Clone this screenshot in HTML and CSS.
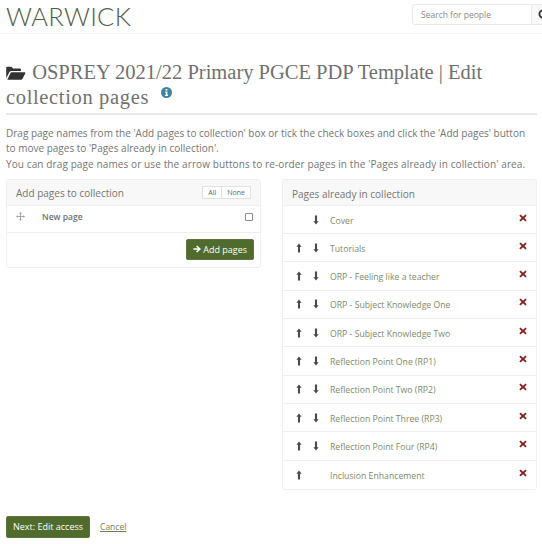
FILE: index.html
```html
<!DOCTYPE html>
<html lang="en">
<head>
    <meta charset="UTF-8">
    <title>Edit collection pages</title>
    <link rel="stylesheet" href="styles.css">
</head>
<body>
    <svg class="defs" width="0" height="0">
        <symbol id="up" viewBox="0 0 8 12"><path d="M4 0 7.5 4.2H5.4V12H2.6V4.2H.5Z"/></symbol>
        <symbol id="down" viewBox="0 0 8 12"><path d="M4 12 .5 7.8H2.6V0H5.4V7.8H7.5Z"/></symbol>
        <symbol id="cross" viewBox="0 0 10 10"><path d="M1.9.6 5 3.3 8.1.6 9.6 2.1 6.8 5 9.6 7.9 8.1 9.4 5 6.7 1.9 9.4.4 7.9 3.2 5 .4 2.1Z"/></symbol>
    </svg>

    <header class="topbar">
        <div class="logo">WARWICK</div>
        <div class="search">
            <input class="search-input" type="text" placeholder="Search for people">
            <div class="search-btn">
                <svg width="12" height="12" viewBox="0 0 12 12"><circle cx="5" cy="5" r="3.6" fill="none" stroke="#333" stroke-width="1.8"/></svg>
            </div>
        </div>
    </header>

    <main class="content">
        <h1 class="title">
            <svg class="folder" width="20" height="14" viewBox="0 0 21 15"><path d="M0 13V2Q0 .8 1.2 .8H5.5L7.3 2.6H14.5Q15.8 2.6 15.8 3.9V5.3H5.5Q4.2 5.3 3.5 6.5Z"/><path d="M1.2 14.6 4.6 7.4Q5 6.6 6 6.6H19.6Q21 6.6 20.4 8L17.5 13.6Q17 14.6 15.8 14.6Z"/></svg>
            OSPREY 2021/22 Primary PGCE PDP Template | Edit <span class="title-end">collection pages</span>
            <svg class="info" width="11" height="11" viewBox="0 0 11 11"><circle cx="5.5" cy="5.5" r="5.5" fill="#3f83a3"/><path d="M4.6 2h1.8v1.6H4.6ZM4.2 4.4h2.2v3.4h.6V9H4.1V7.8h.7V5.6h-.6Z" fill="#fff"/></svg>
        </h1>

        <p class="intro">Drag page names from the 'Add pages to collection' box or tick the check boxes and click the 'Add pages' button to move pages to 'Pages already in collection'.<br><span class="intro-end">You can drag page names or use the arrow buttons to re-order pages in the 'Pages already in collection' area.</span></p>

        <div class="columns">
            <section class="panel">
                <div class="panel-head panel-head-split">
                    <span class="panel-label">Add pages to collection</span>
                    <div class="btn-group"><span class="mini">All</span><span class="mini">None</span></div>
                </div>
                <div class="new-row">
                    <svg class="move" width="9" height="9" viewBox="0 0 9 9"><path d="M4.5 0 6 1.7H5V4H7.3V3L9 4.5 7.3 6V5H5V7.3H6L4.5 9 3 7.3H4V5H1.7V6L0 4.5 1.7 3V4H4V1.7H3Z"/></svg>
                    <span class="new-name">New page</span>
                    <span class="checkbox"></span>
                </div>
                <div class="panel-foot">
                    <button class="btn">
                        <svg width="8" height="8" viewBox="0 0 9 9"><path d="M4.6.5 9 4.5 4.6 8.5 3.5 7.4 5.6 5.4H.5V3.6H5.6L3.5 1.6Z" fill="#fff"/></svg>
                        Add pages
                    </button>
                </div>
            </section>

            <section class="panel">
                <div class="panel-head"><span class="panel-label">Pages already in collection</span></div>
                <ul class="pages">
                    <li class="page"><span class="arrow"></span><span class="arrow"><svg class="ic"><use href="#down"/></svg></span><span class="page-name">Cover</span><svg class="x"><use href="#cross"/></svg></li>
                    <li class="page"><span class="arrow"><svg class="ic"><use href="#up"/></svg></span><span class="arrow"><svg class="ic"><use href="#down"/></svg></span><span class="page-name">Tutorials</span><svg class="x"><use href="#cross"/></svg></li>
                    <li class="page"><span class="arrow"><svg class="ic"><use href="#up"/></svg></span><span class="arrow"><svg class="ic"><use href="#down"/></svg></span><span class="page-name">ORP - Feeling like a teacher</span><svg class="x"><use href="#cross"/></svg></li>
                    <li class="page"><span class="arrow"><svg class="ic"><use href="#up"/></svg></span><span class="arrow"><svg class="ic"><use href="#down"/></svg></span><span class="page-name">ORP - Subject Knowledge One</span><svg class="x"><use href="#cross"/></svg></li>
                    <li class="page"><span class="arrow"><svg class="ic"><use href="#up"/></svg></span><span class="arrow"><svg class="ic"><use href="#down"/></svg></span><span class="page-name">ORP - Subject Knowledge Two</span><svg class="x"><use href="#cross"/></svg></li>
                    <li class="page"><span class="arrow"><svg class="ic"><use href="#up"/></svg></span><span class="arrow"><svg class="ic"><use href="#down"/></svg></span><span class="page-name">Reflection Point One (RP1)</span><svg class="x"><use href="#cross"/></svg></li>
                    <li class="page"><span class="arrow"><svg class="ic"><use href="#up"/></svg></span><span class="arrow"><svg class="ic"><use href="#down"/></svg></span><span class="page-name">Reflection Point Two (RP2)</span><svg class="x"><use href="#cross"/></svg></li>
                    <li class="page"><span class="arrow"><svg class="ic"><use href="#up"/></svg></span><span class="arrow"><svg class="ic"><use href="#down"/></svg></span><span class="page-name">Reflection Point Three (RP3)</span><svg class="x"><use href="#cross"/></svg></li>
                    <li class="page"><span class="arrow"><svg class="ic"><use href="#up"/></svg></span><span class="arrow"><svg class="ic"><use href="#down"/></svg></span><span class="page-name">Reflection Point Four (RP4)</span><svg class="x"><use href="#cross"/></svg></li>
                    <li class="page"><span class="arrow"><svg class="ic"><use href="#up"/></svg></span><span class="arrow"></span><span class="page-name">Inclusion Enhancement</span><svg class="x"><use href="#cross"/></svg></li>
                </ul>
            </section>
        </div>

        <div class="actions">
            <button class="btn btn-next">Next: Edit access</button>
            <a class="cancel" href="#">Cancel</a>
        </div>
    </main>
</body>
</html>
```

FILE: styles.css
```css
html, body {
    overflow: hidden;
}
body {
    font-family: 'Open Sans', 'Liberation Sans', sans-serif;
    font-size: 9px;
    background-color: white;
    color: #666;
    margin: 0;
    width: 542px;
    height: 544px;
}
.defs {
    position: absolute;
}
.topbar {
    display: flex;
    justify-content: space-between;
    height: 34px;
    box-sizing: border-box;
    border-bottom: 1px solid #f5f5f5;
    padding: 4px 0 0 6px;
}
.logo {
    font-family: 'Lato', sans-serif;
    font-weight: 300;
    font-size: 25.5px;
    line-height: 25px;
    letter-spacing: 0.3px;
    color: #525c4a;
}
.search {
    display: flex;
    width: 130px;
    height: 21px;
    flex-shrink: 0;
}
.search-input {
    width: 120px;
    box-sizing: border-box;
    border: 1px solid #e9e9e9;
    border-radius: 3px 0 0 3px;
    padding: 0 8px;
    font-family: inherit;
    font-size: 8.5px;
    outline: none;
}
.search-input::placeholder {
    color: #8a8a8a;
}
.search-btn {
    width: 30px;
    flex-shrink: 0;
    box-sizing: border-box;
    border: 1px solid #e9e9e9;
    border-left: none;
    background-color: #f8f8f8;
    padding: 4px 0 0 6px;
}
.content {
    padding: 0 6px;
}
.title {
    font-family: 'Liberation Serif', serif;
    font-weight: normal;
    font-size: 20.5px;
    line-height: 25px;
    color: #707070;
    margin: 26px 0 0;
    padding-bottom: 3px;
    border-bottom: 2px solid #e8e8e8;
    width: 531px;
}
.title-end {
    letter-spacing: 0.65px;
}
.folder {
    fill: #333;
    vertical-align: -1px;
    margin-right: 1px;
}
.info {
    vertical-align: 6px;
    margin-left: 7px;
}
.intro {
    font-size: 10px;
    line-height: 15.3px;
    margin: 11px 0 0;
    color: #757575;
    width: 531px;
}
.intro-end {
    letter-spacing: 0.11px;
}
.columns {
    display: grid;
    grid-template-columns: 255px 255px;
    column-gap: 21px;
    align-items: start;
    margin-top: 7px;
}
.panel {
    border: 1px solid #efefef;
    border-radius: 3px;
    background-color: white;
}
.panel-head {
    background-color: #f8f8f8;
    border-bottom: 1px solid #efefef;
    height: 26px;
    box-sizing: border-box;
    padding: 0 9px;
    font-size: 10px;
    line-height: 26px;
    color: #757575;
}
.panel-label {
    display: block;
    padding-top: 1px;
}
.panel-head-split {
    display: flex;
    justify-content: space-between;
    align-items: center;
}
.btn-group {
    display: flex;
}
.mini {
    font-size: 7px;
    line-height: 11px;
    padding: 0 5px;
    border: 1px solid #e0e0e0;
    background-color: white;
    color: #666;
}
.mini + .mini {
    border-left: none;
}
.new-row {
    display: flex;
    align-items: center;
    height: 27px;
    border-bottom: 1px solid #efefef;
    padding: 0 7px 4px 9px;
    box-sizing: border-box;
}
.move {
    fill: #a5a5a5;
    flex-shrink: 0;
}
.new-name {
    margin-left: 17px;
    flex: 1;
    font-size: 8.5px;
    font-weight: 600;
    color: #707070;
}
.checkbox {
    width: 6px;
    height: 6px;
    border: 1px solid #8a8a8a;
    border-radius: 1px;
}
.panel-foot {
    display: flex;
    justify-content: flex-end;
    padding: 6px 6px 7px 0;
}
.btn {
    font-family: inherit;
    font-size: 9px;
    color: white;
    background-color: #4f6b2e;
    border: 1px solid #62743f;
    border-radius: 2px;
    height: 21px;
    padding: 0 6px;
    display: inline-flex;
    align-items: center;
    gap: 2px;
}
.pages {
    list-style-type: none;
    margin: 0;
    padding: 0;
}
.page {
    display: flex;
    align-items: center;
    height: 28.3px;
    box-sizing: border-box;
    border-bottom: 1px solid #efefef;
    padding: 0 9px 0 13px;
}
.page:last-child {
    border-bottom: none;
}
.arrow {
    width: 17px;
    height: 12px;
    flex-shrink: 0;
}
.ic {
    width: 6px;
    height: 10px;
    fill: #4a4a4a;
    display: block;
    margin-top: 1px;
}
.page-name {
    flex: 1;
    padding-top: 2px;
    font-size: 8.7px;
    color: #7d8a68;
}
.x {
    width: 8px;
    height: 8px;
    fill: #8a2020;
    margin-top: -4px;
}
.actions {
    display: flex;
    align-items: center;
    margin-top: 26px;
}
.btn-next {
    height: 22px;
    padding: 0 6px;
}
.cancel {
    margin-left: 10px;
    font-size: 8.5px;
    color: #6f8055;
}
```
